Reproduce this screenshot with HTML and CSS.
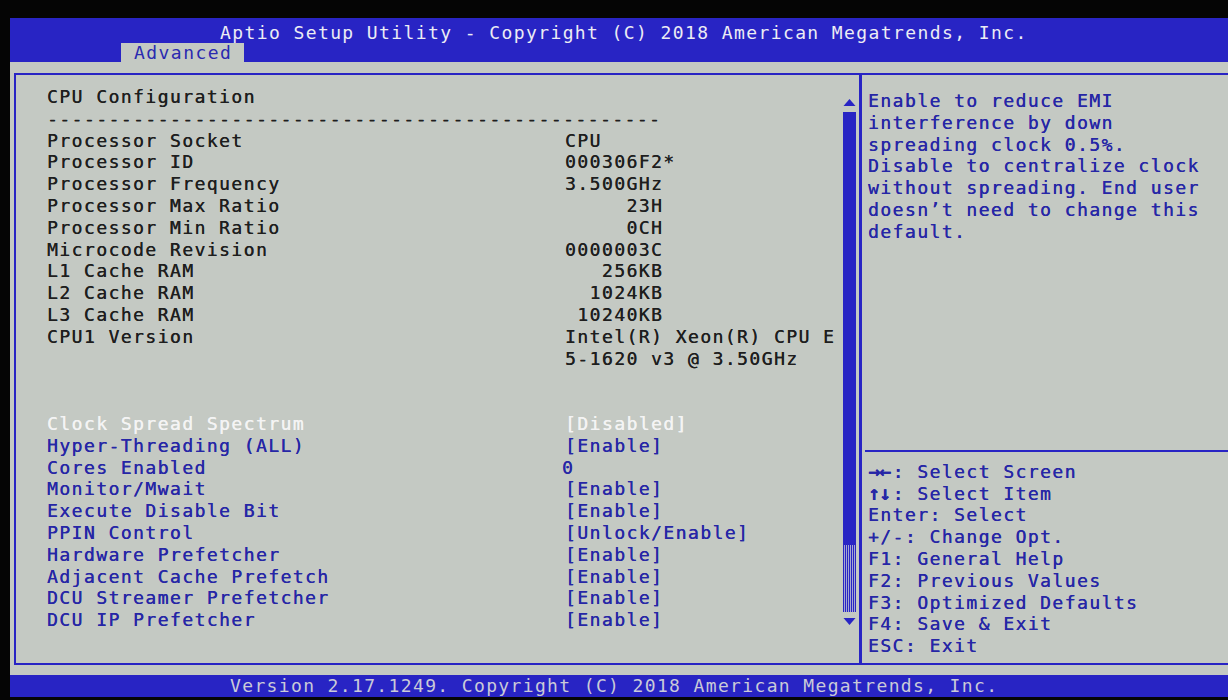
FILE: index.html
```html
<!DOCTYPE html>
<html>
<head>
<meta charset="utf-8">
<title>Aptio Setup Utility</title>
<link rel="stylesheet" href="styles.css">
</head>
<body>
<div class="screen">
  <div class="top">
    <div class="title">Aptio Setup Utility - Copyright (C) 2018 American Megatrends, Inc.</div>
    <div class="tabs"><span class="tab">Advanced</span></div>
  </div>

  <div class="work">
    <div class="frame">
      <div class="pane">
        <div class="list">
          <div class="row">CPU Configuration</div>
          <div class="row">--------------------------------------------------</div>
          <div class="row"><span class="lbl">Processor Socket</span><span class="val">CPU</span></div>
          <div class="row"><span class="lbl">Processor ID</span><span class="val">000306F2*</span></div>
          <div class="row"><span class="lbl">Processor Frequency</span><span class="val">3.500GHz</span></div>
          <div class="row"><span class="lbl">Processor Max Ratio</span><span class="val">     23H</span></div>
          <div class="row"><span class="lbl">Processor Min Ratio</span><span class="val">     0CH</span></div>
          <div class="row"><span class="lbl">Microcode Revision</span><span class="val">0000003C</span></div>
          <div class="row"><span class="lbl">L1 Cache RAM</span><span class="val">   256KB</span></div>
          <div class="row"><span class="lbl">L2 Cache RAM</span><span class="val">  1024KB</span></div>
          <div class="row"><span class="lbl">L3 Cache RAM</span><span class="val"> 10240KB</span></div>
          <div class="row"><span class="lbl">CPU1 Version</span><span class="val">Intel(R) Xeon(R) CPU E</span></div>
          <div class="row"><span class="lbl"></span><span class="val">5-1620 v3 @ 3.50GHz</span></div>
          <div class="row"></div>
          <div class="row"></div>
          <div class="row opt current"><span class="lbl">Clock Spread Spectrum</span><span class="val">[Disabled]</span></div>
          <div class="row opt"><span class="lbl">Hyper-Threading (ALL)</span><span class="val">[Enable]</span></div>
          <div class="row opt"><span class="lbl">Cores Enabled</span><span class="val num">0</span></div>
          <div class="row opt"><span class="lbl">Monitor/Mwait</span><span class="val">[Enable]</span></div>
          <div class="row opt"><span class="lbl">Execute Disable Bit</span><span class="val">[Enable]</span></div>
          <div class="row opt"><span class="lbl">PPIN Control</span><span class="val">[Unlock/Enable]</span></div>
          <div class="row opt"><span class="lbl">Hardware Prefetcher</span><span class="val">[Enable]</span></div>
          <div class="row opt"><span class="lbl">Adjacent Cache Prefetch</span><span class="val">[Enable]</span></div>
          <div class="row opt"><span class="lbl">DCU Streamer Prefetcher</span><span class="val">[Enable]</span></div>
          <div class="row opt"><span class="lbl">DCU IP Prefetcher</span><span class="val">[Enable]</span></div>
        </div>
        <div class="scroll">
          <svg class="arrow" width="13" height="7" viewBox="0 0 13 7"><polygon points="6.5,0 12.5,7 0.5,7" /></svg>
          <div class="thumb"></div>
          <div class="track"></div>
          <svg class="arrow down" width="13" height="7" viewBox="0 0 13 7"><polygon points="0.5,0 12.5,0 6.5,7" /></svg>
        </div>
      </div>

      <div class="side">
        <div class="help">
          <div class="row">Enable to reduce EMI</div>
          <div class="row">interference by down</div>
          <div class="row">spreading clock 0.5%.</div>
          <div class="row">Disable to centralize clock</div>
          <div class="row">without spreading. End user</div>
          <div class="row">doesn’t need to change this</div>
          <div class="row">default.</div>
        </div>
        <div class="sep"></div>
        <div class="keys">
          <div class="row"><b>→←</b>: Select Screen</div>
          <div class="row"><b>↑↓</b>: Select Item</div>
          <div class="row">Enter: Select</div>
          <div class="row">+/-: Change Opt.</div>
          <div class="row">F1: General Help</div>
          <div class="row">F2: Previous Values</div>
          <div class="row">F3: Optimized Defaults</div>
          <div class="row">F4: Save &amp; Exit</div>
          <div class="row">ESC: Exit</div>
        </div>
      </div>
    </div>
  </div>

  <div class="bottom">Version 2.17.1249. Copyright (C) 2018 American Megatrends, Inc.</div>
</div>
</body>
</html>
```

FILE: styles.css
```css
*{ padding:0; margin:0; box-sizing:border-box; }
body{
  background:#050505;
  overflow:hidden;
  font-family:"DejaVu Sans Mono", "Liberation Mono", monospace;
  font-size:18px;
  letter-spacing:1.45px;
}
.screen{
  margin:18px 0 0 10px;
  width:1218px;
  height:679px;
  display:flex;
  flex-direction:column;
  background:#c4c9c3;
}

/* header */
.top{ background:#2824c4; height:44px; }
.title{
  padding:5px 0 0 210px;
  height:24px;
  line-height:19px;
  color:#ececf4;
  letter-spacing:1.4px;
  white-space:pre;
}
.tabs{ height:20px; }
.tab{
  display:inline-block;
  margin-left:111px;
  width:123px;
  height:20px;
  line-height:20px;
  padding-left:13px;
  background:#c4c9c3;
  color:#2a2ab0;
}

/* work area */
.work{ flex:1; padding:11px 0 0 4px; }
.frame{
  height:592px;
  display:flex;
  border:2px solid #2824c4;
  border-right:0;
}
.row{
  height:21.8px;
  line-height:21.8px;
  white-space:pre;
  color:#1e1e1e;
  text-shadow:0.3px 0 0 currentColor;
}
.lbl{ display:inline-block; width:518px; }
.val{ display:inline-block; }
.val.num{ margin-left:-3px; }
.row.opt{ color:#2626a6; }
.row.current{ color:#f4f4f4; }

.pane{
  width:846px;
  display:flex;
  border-right:3px solid #2824c4;
}
.list{ flex:1; padding:11px 0 0 31px; }

.scroll{
  width:13px;
  margin:24px 3px 0 0;
  display:flex;
  flex-direction:column;
}
.arrow{ display:block; fill:#2824c4; }
.thumb{ height:433px; margin-top:6px; background:#2824c4; }
.track{
  height:67px;
  background:repeating-linear-gradient(90deg, #2824c4 0 1px, #a4a6d2 1px 2px);
}
.arrow.down{ margin-top:6px; }

/* help side */
.side{
  flex:1;
  display:flex;
  flex-direction:column;
  padding:15px 0 6px 0;
}
.help{ flex:1; padding-left:6px; }
.help .row, .keys .row{ color:#2626a6; }
.sep{ border-top:2px solid #2824c4; margin:0 0 9px 3px; }
.keys{ padding-left:6px; }
.keys b{
  display:inline-block;
  width:24.6px;
  font-size:20px;
  font-weight:bold;
  letter-spacing:-1px;
}

/* footer */
.bottom{
  margin-top:10px;
  height:22px;
  line-height:22px;
  padding-left:220px;
  background:#2824c4;
  color:#cacad8;
  letter-spacing:1.36px;
  white-space:pre;
}
```
